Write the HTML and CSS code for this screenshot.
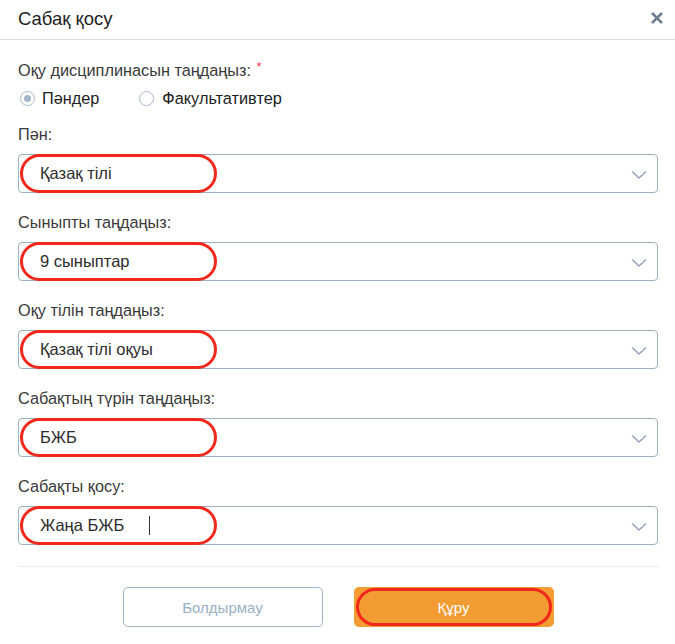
FILE: index.html
```html
<!DOCTYPE html>
<html lang="kk">
<head>
<meta charset="utf-8">
<title>Сабақ қосу</title>
<link rel="stylesheet" href="styles.css">
</head>
<body>
<div class="modal">
  <header class="modal-header">
    <h1 class="modal-title">Сабақ қосу</h1>
    <button class="close" aria-label="Жабу">
      <svg width="14" height="14" viewBox="0 0 14 14"><path d="M2 2L12 12M12 2L2 12" stroke="#6f7d92" stroke-width="2.6" stroke-linecap="butt"/></svg>
    </button>
  </header>
  <div class="modal-body">
    <div class="field-label first">Оқу дисциплинасын таңдаңыз: <span class="req">*</span></div>
    <div class="radios">
      <label class="radio r1"><span class="dot checked"></span>Пәндер</label>
      <label class="radio r2"><span class="dot"></span>Факультативтер</label>
    </div>

    <div class="field-label after-radios">Пән:</div>
    <div class="select"><span class="value">Қазақ тілі</span><span class="mark"></span><svg class="chev" width="16" height="10" viewBox="0 0 16 10"><path d="M1 1.5L8 8L15 1.5" fill="none" stroke="#8fa0b3" stroke-width="1.3"/></svg></div>

    <div class="field-label">Сыныпты таңдаңыз:</div>
    <div class="select"><span class="value">9 сыныптар</span><span class="mark"></span><svg class="chev" width="16" height="10" viewBox="0 0 16 10"><path d="M1 1.5L8 8L15 1.5" fill="none" stroke="#8fa0b3" stroke-width="1.3"/></svg></div>

    <div class="field-label">Оқу тілін таңдаңыз:</div>
    <div class="select"><span class="value">Қазақ тілі оқуы</span><span class="mark"></span><svg class="chev" width="16" height="10" viewBox="0 0 16 10"><path d="M1 1.5L8 8L15 1.5" fill="none" stroke="#8fa0b3" stroke-width="1.3"/></svg></div>

    <div class="field-label">Сабақтың түрін таңдаңыз:</div>
    <div class="select"><span class="value">БЖБ</span><span class="mark"></span><svg class="chev" width="16" height="10" viewBox="0 0 16 10"><path d="M1 1.5L8 8L15 1.5" fill="none" stroke="#8fa0b3" stroke-width="1.3"/></svg></div>

    <div class="field-label">Сабақты қосу:</div>
    <div class="select"><span class="value">Жаңа БЖБ</span><span class="caret"></span><span class="mark"></span><svg class="chev" width="16" height="10" viewBox="0 0 16 10"><path d="M1 1.5L8 8L15 1.5" fill="none" stroke="#8fa0b3" stroke-width="1.3"/></svg></div>

    <div class="footer">
      <button class="btn btn-cancel">Болдырмау</button>
      <button class="btn btn-ok">Құру<span class="mark mark-btn"></span></button>
    </div>
  </div>
</div>
</body>
</html>
```
FILE: styles.css
```css
* { box-sizing: border-box; }
html, body { margin: 0; padding: 0; background: #fff; }
body { font-family: "Liberation Sans", Arial, sans-serif; color: #333; }

.modal { width: 675px; }

.modal-header {
  height: 40px;
  border-bottom: 1px solid #dedede;
  display: flex;
  align-items: center;
  justify-content: space-between;
  padding: 0 8px 1px 18px;
}
.modal-title { margin: 0; font-size: 18.5px; line-height: 22px; font-weight: normal; color: #1e1e1e; }
.close { border: 0; background: none; padding: 0 3px; display: flex; margin-top: -2px; }

.modal-body { padding: 0 17px 0 18px; }

.field-label { font-size: 16.3px; line-height: 20px; height: 20px; color: #3a3a3a; margin-top: 19px; }
.field-label.first { margin-top: 20px; }
.field-label.after-radios { margin-top: 16px; }
.req { color: #e83a5a; font-size: 13px; position: relative; top: -5px; margin-left: 1px; line-height: 0; }

.radios { display: flex; margin-top: 8px; height: 20px; align-items: center; }
.radio { display: flex; align-items: center; font-size: 16.3px; color: #222; }
.r1 { margin-left: 2px; margin-right: 40px; }
.dot {
  width: 15px; height: 15px; border-radius: 50%;
  border: 1px solid #a9b9cb; margin-right: 8px; position: relative; background: #fff;
}
.r1 .dot { margin-right: 7px; }
.dot.checked::after {
  content: ""; position: absolute; left: 3px; top: 3px;
  width: 7px; height: 7px; border-radius: 50%; background: #a3b5c8;
}

.select {
  position: relative;
  height: 39px;
  margin-top: 10px;
  border: 1px solid #9fb0c2;
  border-radius: 4px;
  display: flex;
  align-items: center;
  padding-left: 21px;
  font-size: 16.5px;
  color: #2d2d2d;
}
.chev { position: absolute; right: 10px; top: 15px; }
.caret { display: inline-block; width: 1px; height: 19px; background: #333; margin-left: 25px; }

.mark {
  position: absolute;
  left: 1px; top: -1px;
  width: 197px; height: 39px;
  border: 3px solid #f2281c;
  border-radius: 20px;
  pointer-events: none;
}

.footer {
  margin-top: 21px;
  border-top: 1px solid #e2ebf7;
  padding-top: 20px;
  display: flex;
  justify-content: center;
  gap: 31px;
}
.btn {
  width: 200px; height: 40px;
  font-family: "Liberation Sans", Arial, sans-serif;
  font-size: 15px;
  border-radius: 5px;
  position: relative;
  padding: 0;
}
.btn-cancel { background: #fff; border: 1px solid #9fb3c8; color: #9ab0c5; }
.btn-ok { background: #f39c33; border: 0; color: #fff; }
.mark-btn { left: 2px; top: 1px; width: 196px; height: 38px; }
```
